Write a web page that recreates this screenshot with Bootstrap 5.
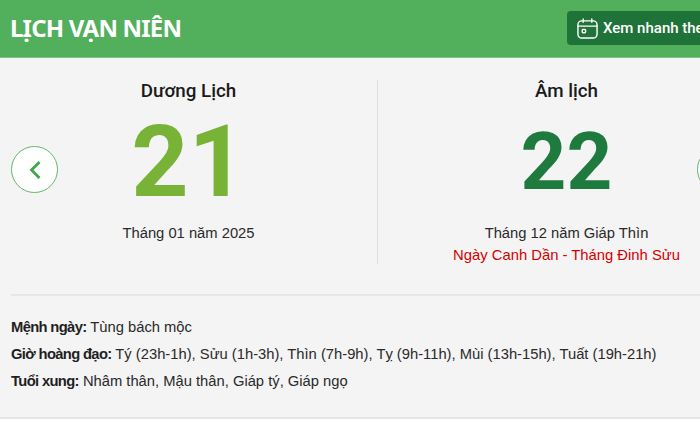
<!DOCTYPE html>
<html lang="vi">
<head>
  <meta charset="UTF-8" />
  <meta name="viewport" content="width=device-width, initial-scale=1.0"/>
  <title>Lịch vạn niên</title>
  <link href="https://cdn.jsdelivr.net/npm/bootstrap@5.3.3/dist/css/bootstrap.min.css" rel="stylesheet"/>
  <style>
    body { background: #fff; overflow: hidden; font-family: "Liberation Sans", Arial, sans-serif; color: #222; }
    .lvn-wrap { width: 755px; }
    .lvn-head { height: 58px; background: #52af5c; border-bottom: 1px solid #7cc284; padding-left: 10px; }
    .lvn-title { font-family: "Noto Sans", sans-serif; font-weight: 700; font-size: 24px; letter-spacing: -0.8px; color: #fff; margin: -1px 0 0; line-height: 1; }
    .lvn-quick { width: 188px; height: 34px; background: #1f7238; border: 0; border-radius: 4px; color: #fff; font-family: Roboto, sans-serif; font-weight: 500; font-size: 15px; padding: 1px 0 0 10px; gap: 5px; white-space: nowrap; margin-top: -1px; }
    .lvn-body { background: #f4f4f4; border-bottom: 2px solid #e6e6e6; height: 361px; padding: 22px 0 0; }
    .lvn-dates { position: relative; height: 184px; margin-bottom: 30px; }
    .lvn-col { width: 377px; text-align: center; }
    .lvn-col + .lvn-col { width: 378px; border-left: 1px solid #dedede; }
    .lvn-name { font-family: Roboto, sans-serif; font-weight: 500; font-size: 18.8px; color: #1a1a1a; line-height: 21px; margin: 1px 0 0; }
    .lvn-day { font-family: Roboto, sans-serif; font-weight: 700; line-height: 1; display: flex; align-items: center; justify-content: center; height: 108px; margin-top: 6px; }
    .lvn-day-sun { font-size: 100px; color: #78b338; }
    .lvn-day-moon { font-size: 80px; color: #1f7a3d; }
    .lvn-sub { font-size: 14.75px; line-height: 22px; margin: 6px 0 0; color: #2a2a2a; }
    .lvn-can { font-size: 14.8px; line-height: 22px; margin: 0; color: #d40000; }
    .lvn-arrow { position: absolute; top: 66px; width: 47px; height: 47px; border-radius: 50%; background: #fff; border: 1px solid #5fb868; padding: 0; }
    .lvn-prev { left: 11px; }
    .lvn-next { right: 11px; }
    .lvn-info { margin: 0 0 0 11px; border-top: 2px solid #e6e6e6; padding-top: 18px; }
    .lvn-info p { font-size: 14.75px; line-height: 27px; margin: 0; color: #2a2a2a; white-space: nowrap; }
    .lvn-info b { color: #1f1f1f; letter-spacing: -0.65px; }
  </style>
</head>
<body>
  <div class="lvn-wrap">
    <div class="lvn-head d-flex align-items-center justify-content-between">
      <h1 class="lvn-title">LỊCH VẠN NIÊN</h1>
      <button type="button" class="lvn-quick d-flex align-items-center">
        <svg width="21" height="21" viewBox="0 0 22 22" fill="none" stroke="#fff" stroke-width="1.5" stroke-linecap="round">
          <rect x="1" y="3" width="20" height="18" rx="4"/>
          <path d="M1 8.500h20M6.500 1v3.500M15.500 1v3.500"/>
          <rect x="5.500" y="12" width="3.500" height="3.500" rx=".8"/>
        </svg>
        Xem nhanh the
      </button>
    </div>
    <div class="lvn-body">
      <div class="lvn-dates d-flex">
        <div class="lvn-col">
          <p class="lvn-name">Dương Lịch</p>
          <div class="lvn-day lvn-day-sun">21</div>
          <p class="lvn-sub">Tháng 01 năm 2025</p>
        </div>
        <div class="lvn-col">
          <p class="lvn-name">Âm lịch</p>
          <div class="lvn-day lvn-day-moon">22</div>
          <p class="lvn-sub">Tháng 12 năm Giáp Thìn</p>
          <p class="lvn-can">Ngày Canh Dần - Tháng Đinh Sửu</p>
        </div>
        <button type="button" class="lvn-arrow lvn-prev" aria-label="Trước">
          <svg width="14" height="22" viewBox="0 0 14 22" fill="none" stroke="#3fa54c" stroke-width="2.800"><path d="M11.500 3 3.500 11l8 8"/></svg>
        </button>
        <button type="button" class="lvn-arrow lvn-next" aria-label="Sau">
          <svg width="14" height="22" viewBox="0 0 14 22" fill="none" stroke="#3fa54c" stroke-width="2.800"><path d="M2.500 3l8 8-8 8"/></svg>
        </button>
      </div>
      <div class="lvn-info">
        <p><b>Mệnh ngày:</b> Tùng bách mộc</p>
        <p><b>Giờ hoàng đạo:</b> Tý (23h-1h), Sửu (1h-3h), Thìn (7h-9h), Tỵ (9h-11h), Mùi (13h-15h), Tuất (19h-21h)</p>
        <p><b>Tuổi xung:</b> Nhâm thân, Mậu thân, Giáp tý, Giáp ngọ</p>
      </div>
    </div>
  </div>
</body>
</html>
